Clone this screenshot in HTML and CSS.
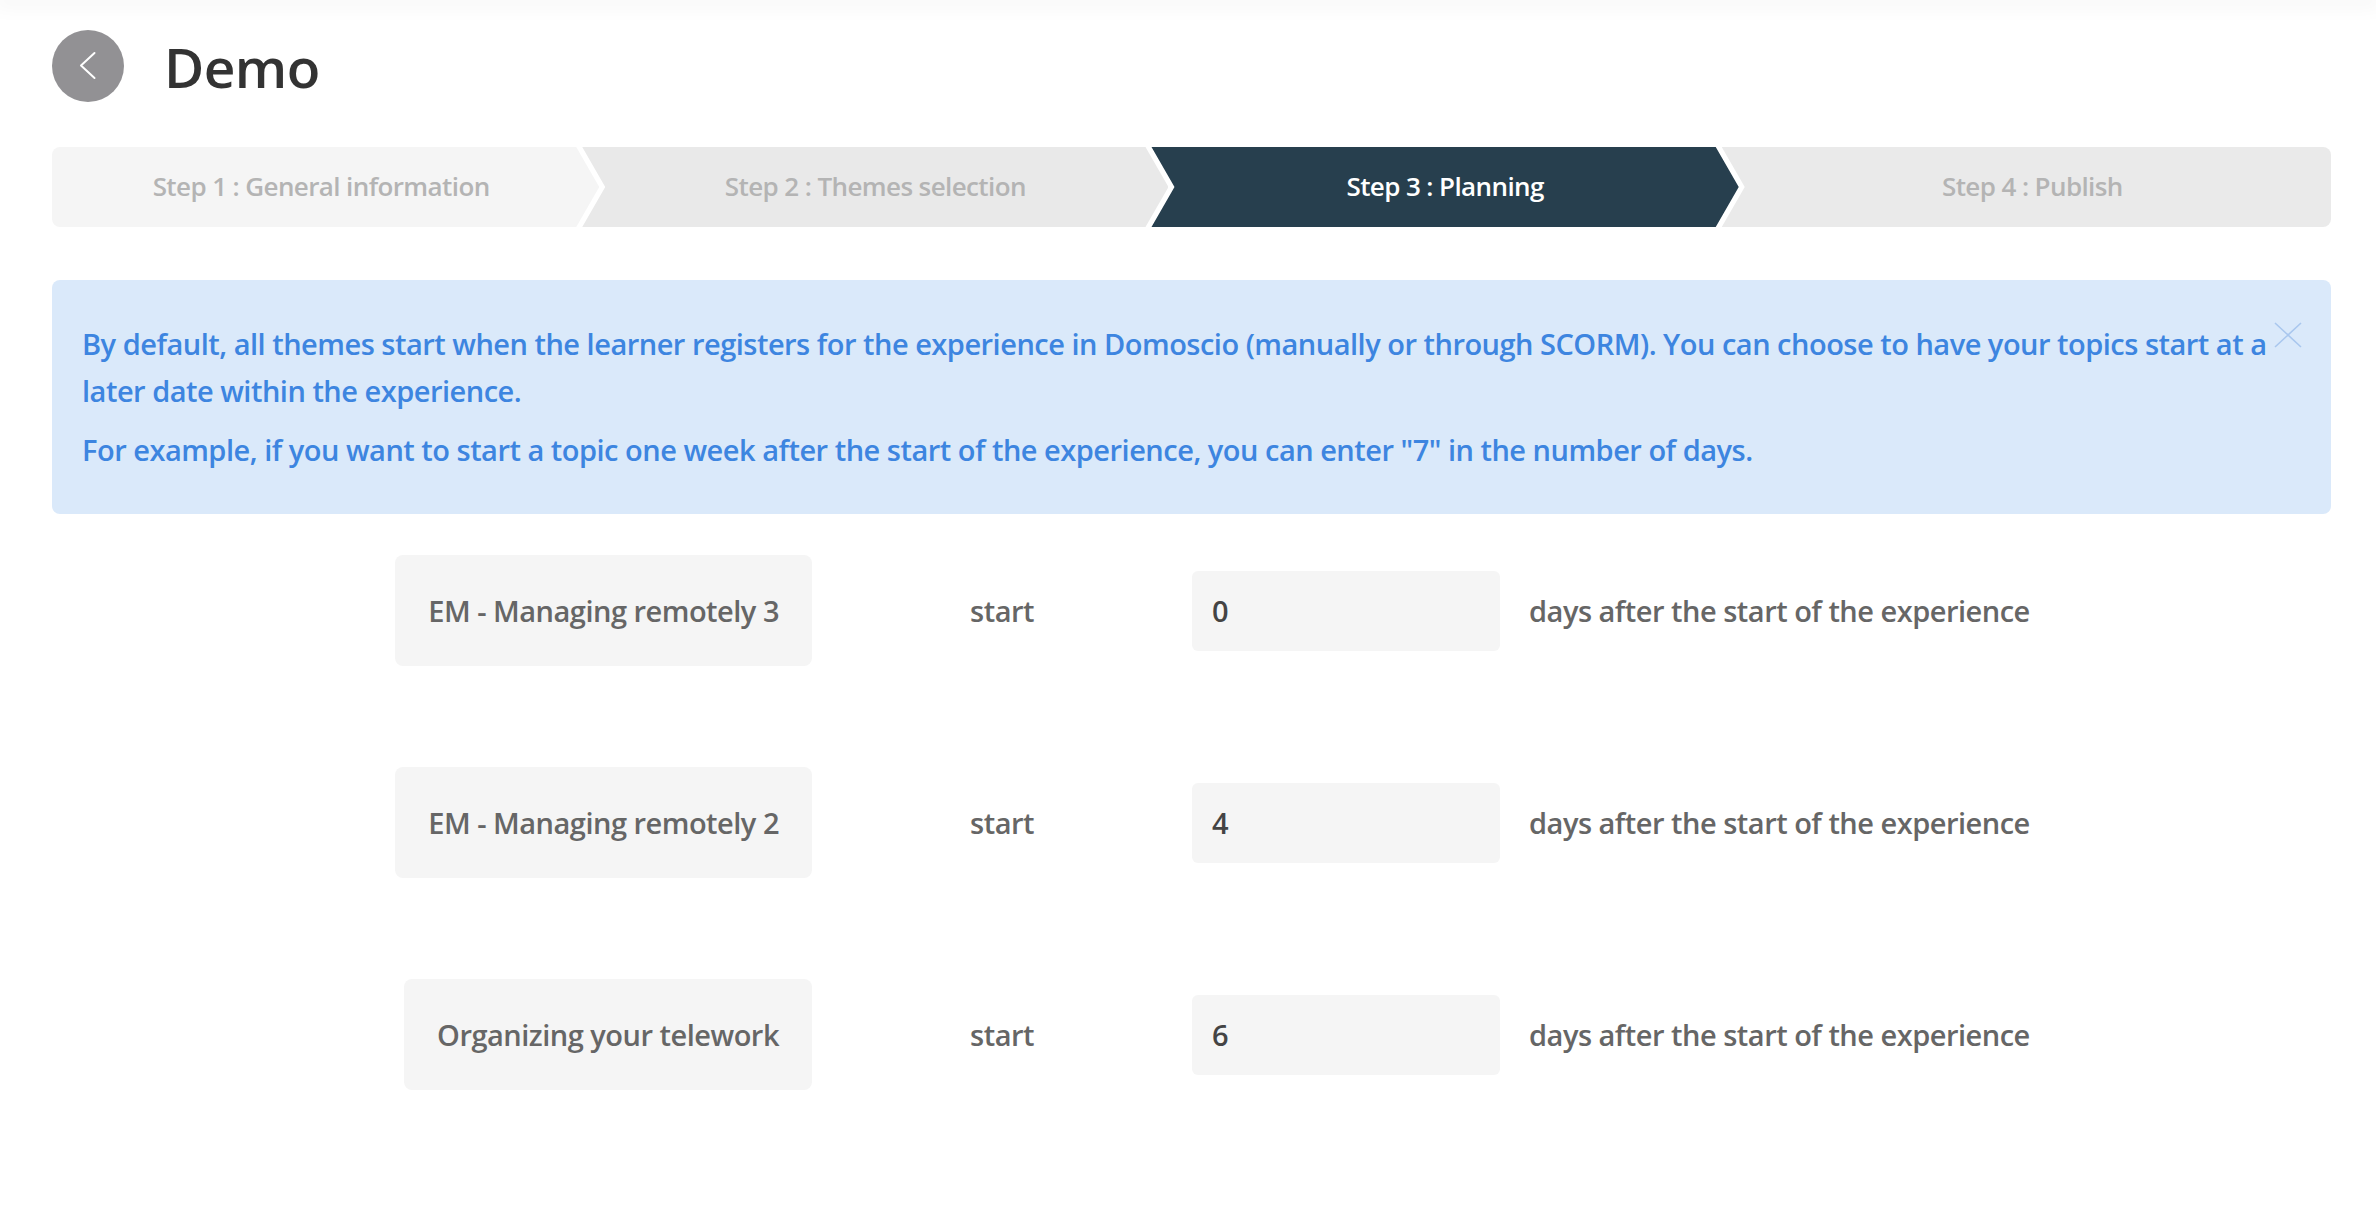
FILE: index.html
```html
<!DOCTYPE html>
<html lang="en">
<head>
<meta charset="utf-8">
<title>Demo - Planning</title>
<link rel="stylesheet" href="styles.css">
</head>
<body>
<div class="topbar"></div>
<main class="page">
  <header class="head">
    <button class="back" type="button" aria-label="Back">
      <svg class="back-icon" viewBox="0 0 72 72" width="72" height="72" aria-hidden="true">
        <path d="M42.5 23 L29 35.5 L42.5 48" fill="none" stroke="#ffffff" stroke-width="2" stroke-linecap="round" stroke-linejoin="round"/>
      </svg>
    </button>
    <h1 class="title">Demo</h1>
  </header>

  <nav class="steps">
    <div class="step step-first s1"><span class="step-label">Step 1 : General information</span></div>
    <div class="step s2"><span class="step-label">Step 2 : Themes selection</span></div>
    <div class="step step-active s3"><span class="step-label">Step 3 : Planning</span></div>
    <div class="step step-last s4"><span class="step-label">Step 4 : Publish</span></div>
  </nav>

  <div class="alert">
    <p>By default, all themes start when the learner registers for the experience in Domoscio (manually or through SCORM). You can choose to have your topics start at a later date within the experience.</p>
    <p>For example, if you want to start a topic one week after the start of the experience, you can enter "7" in the number of days.</p>
    <button class="close" type="button" aria-label="Close">
      <svg viewBox="0 0 28 26" width="28" height="26" aria-hidden="true">
        <path d="M1 1 L27 25 M27 1 L1 25" fill="none" stroke="#a9c7ee" stroke-width="1.6"/>
      </svg>
    </button>
  </div>

  <section class="plan">
    <div class="theme-cell"><span class="theme">EM - Managing remotely 3</span></div>
    <span class="start">start</span>
    <input class="days" type="text" value="0">
    <span class="after">days after the start of the experience</span>

    <div class="theme-cell"><span class="theme">EM - Managing remotely 2</span></div>
    <span class="start">start</span>
    <input class="days" type="text" value="4">
    <span class="after">days after the start of the experience</span>

    <div class="theme-cell"><span class="theme">Organizing your telework</span></div>
    <span class="start">start</span>
    <input class="days" type="text" value="6">
    <span class="after">days after the start of the experience</span>
  </section>
</main>
</body>
</html>
```

FILE: styles.css
```css
html, body {
  margin: 0;
  padding: 0;
  background: #ffffff;
}

body {
  font-family: "Open Sans", "Noto Sans", sans-serif;
  color: #333333;
}

.topbar {
  height: 0;
  box-shadow: 0 0 20px 6px rgba(0, 0, 0, 0.05);
}

.page {
  padding: 30px 45px 0 52px;
}

/* Header */
.head {
  display: flex;
  align-items: center;
  gap: 40px;
  height: 72px;
}

.back {
  width: 72px;
  height: 72px;
  padding: 0;
  border: 0;
  border-radius: 50%;
  background: #929194;
  display: flex;
  cursor: pointer;
}

.back-icon {
  display: block;
}

.title {
  margin: 0;
  font-size: 55px;
  font-weight: 600;
  line-height: 1;
  color: #333333;
  letter-spacing: -0.6px;
}

/* Stepper */
.steps {
  display: flex;
  height: 80px;
  margin-top: 45px;
}

.step {
  display: flex;
  align-items: center;
  justify-content: center;
  margin-left: -17px;
  font-size: 26px;
  font-weight: 600;
  letter-spacing: -0.6px;
  color: #b4b4b4;
  background: #e9e9e9;
  white-space: nowrap;
  clip-path: polygon(0 0, calc(100% - 23px) 0, 100% 50%, calc(100% - 23px) 100%, 0 100%, 23px 50%);
}

.step-label {
  margin-bottom: 2px;
}

.step-first {
  margin-left: 0;
  background: #f5f5f5;
  border-radius: 8px 0 0 8px;
  clip-path: polygon(0 0, calc(100% - 23px) 0, 100% 50%, calc(100% - 23px) 100%, 0 100%);
}

.step-first .step-label {
  margin-right: 9px;
}

.step-last {
  border-radius: 0 8px 8px 0;
  background: #eaeaea;
  clip-path: polygon(0 0, 100% 0, 100% 100%, 0 100%, 23px 50%);
}

.step-last .step-label {
  margin-left: 12px;
}

.step-active {
  background: #273f4e;
  color: #ffffff;
}

.s1 { flex: 547 1 0; }
.s2 { flex: 586 1 0; }
.s3 { flex: 587 1 0; }
.s4 { flex: 609 1 0; }

/* Alert */
.alert {
  position: relative;
  margin-top: 53px;
  padding: 40px 58px 41px 30px;
  background: #dae9fa;
  border-radius: 8px;
  color: #3d85e0;
  font-size: 29px;
  font-weight: 600;
  letter-spacing: -0.5px;
  line-height: 47px;
}

.alert p {
  margin: 0;
}

.alert p + p {
  margin-top: 12px;
}

.close {
  position: absolute;
  top: 42px;
  right: 29px;
  padding: 0;
  border: 0;
  background: transparent;
  display: flex;
  cursor: pointer;
}

/* Planning rows */
.plan {
  display: grid;
  grid-template-columns: 760px 380px 308px auto;
  align-items: center;
  row-gap: 101px;
  margin-top: 41px;
  font-size: 29px;
  font-weight: 600;
  letter-spacing: -0.5px;
  color: #666666;
}

.theme-cell {
  display: flex;
  justify-content: flex-end;
}

.theme {
  display: flex;
  align-items: center;
  height: 111px;
  padding: 0 33px;
  background: #f5f5f5;
  border-radius: 8px;
  white-space: nowrap;
}

.start {
  text-align: center;
}

.days {
  box-sizing: border-box;
  width: 308px;
  height: 80px;
  padding: 0 20px;
  border: 0;
  border-radius: 6px;
  background: #f5f5f5;
  font-family: inherit;
  font-size: 29px;
  font-weight: 600;
  color: #444444;
  outline: none;
}

.after {
  padding-left: 29px;
  white-space: nowrap;
}
```
